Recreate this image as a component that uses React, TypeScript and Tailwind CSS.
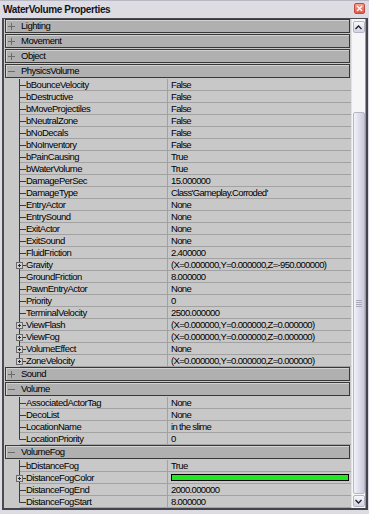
import React from "react";

type Prop = { name: string; value: string; expand?: boolean; color?: string };
type Group = { name: string; props?: Prop[] };

const groups: Group[] = [
    { name: "Lighting" },
    { name: "Movement" },
    { name: "Object" },
    {
        name: "PhysicsVolume",
        props: [
            { name: "bBounceVelocity", value: "False" },
            { name: "bDestructive", value: "False" },
            { name: "bMoveProjectiles", value: "False" },
            { name: "bNeutralZone", value: "False" },
            { name: "bNoDecals", value: "False" },
            { name: "bNoInventory", value: "False" },
            { name: "bPainCausing", value: "True" },
            { name: "bWaterVolume", value: "True" },
            { name: "DamagePerSec", value: "15.000000" },
            { name: "DamageType", value: "Class'Gameplay.Corroded'" },
            { name: "EntryActor", value: "None" },
            { name: "EntrySound", value: "None" },
            { name: "ExitActor", value: "None" },
            { name: "ExitSound", value: "None" },
            { name: "FluidFriction", value: "2.400000" },
            { name: "Gravity", value: "(X=0.000000,Y=0.000000,Z=-950.000000)", expand: true },
            { name: "GroundFriction", value: "8.000000" },
            { name: "PawnEntryActor", value: "None" },
            { name: "Priority", value: "0" },
            { name: "TerminalVelocity", value: "2500.000000" },
            { name: "ViewFlash", value: "(X=0.000000,Y=0.000000,Z=0.000000)", expand: true },
            { name: "ViewFog", value: "(X=0.000000,Y=0.000000,Z=0.000000)", expand: true },
            { name: "VolumeEffect", value: "None", expand: true },
            { name: "ZoneVelocity", value: "(X=0.000000,Y=0.000000,Z=0.000000)", expand: true },
        ],
    },
    { name: "Sound" },
    {
        name: "Volume",
        props: [
            { name: "AssociatedActorTag", value: "None" },
            { name: "DecoList", value: "None" },
            { name: "LocationName", value: "in the slime" },
            { name: "LocationPriority", value: "0" },
        ],
    },
    {
        name: "VolumeFog",
        props: [
            { name: "bDistanceFog", value: "True" },
            { name: "DistanceFogColor", value: "", expand: true, color: "#22e822" },
            { name: "DistanceFogEnd", value: "2000.000000" },
            { name: "DistanceFogStart", value: "8.000000" },
        ],
    },
];

function TreeLines({ last, expand }: { last: boolean; expand?: boolean }) {
    return (
        <svg className="absolute left-[12px] top-0" width="14" height="12" viewBox="0 0 14 12">
            {expand ? (
                <>
                    <path d="M3.5 0V3" stroke="#3a3a3a" />
                    {!last && <path d="M3.5 9V12" stroke="#3a3a3a" />}
                    <rect x="0.5" y="3.5" width="6" height="6" fill="#d0d0d0" stroke="#6a6a6a" />
                    <path d="M2 6.5H5M3.5 5V8" stroke="#2a2a2a" />
                    <path d="M7 6.5H10" stroke="#3a3a3a" />
                </>
            ) : (
                <>
                    <path d={last ? "M3.5 0V6.5" : "M3.5 0V12"} stroke="#3a3a3a" />
                    <path d="M3.5 6.5H10" stroke="#3a3a3a" />
                </>
            )}
        </svg>
    );
}

function CategoryRow({ name, open }: { name: string; open: boolean }) {
    return (
        <div className="h-[15px] px-[1px] pb-[1px]">
            <div className="h-[14px] flex items-center bg-[#b0b0b0] border border-[#383838] shadow-[inset_1px_1px_0_#d2d2d2]">
                <svg className="ml-[2px] shrink-0" width="7" height="7" viewBox="0 0 7 7">
                    <path d="M0 3.5H7" stroke="#6c6c6c" />
                    {!open && <path d="M3.5 0V7" stroke="#6c6c6c" />}
                </svg>
                <span className="ml-[6px] leading-[12px]">{name}</span>
            </div>
        </div>
    );
}

function PropRow({ prop, last }: { prop: Prop; last: boolean }) {
    return (
        <div className="relative h-[12px] flex">
            <div className="w-[16px] shrink-0" />
            <TreeLines last={last} expand={prop.expand} />
            <div className="w-[147px] shrink-0 border-b border-[#a2a2a2] pl-[6px] leading-[11px] whitespace-nowrap overflow-hidden">
                {prop.name}
            </div>
            <div className="flex-1 border-b border-l border-[#a2a2a2] pl-[3px] leading-[11px] tracking-[-0.65px] whitespace-nowrap overflow-hidden flex items-center">
                {prop.color ? (
                    <div className="h-[7px] w-[178px] border border-black" style={{ backgroundColor: prop.color }} />
                ) : (
                    prop.value
                )}
            </div>
        </div>
    );
}

function Chevron({ down }: { down?: boolean }) {
    return (
        <svg width="7" height="5" viewBox="0 0 7 5">
            <path d={down ? "M0.5 1L3.5 4L6.5 1" : "M0.5 4L3.5 1L6.5 4"} stroke="#202030" strokeWidth="1.4" fill="none" />
        </svg>
    );
}

export default function App() {
    return (
        <div className="w-[369px] h-[514px] bg-[#dcdce2] overflow-hidden font-['Liberation_Sans',Arial,sans-serif] text-[9.5px] tracking-[-0.5px] text-black">
            {/* Title bar */}
            <div className="h-[18px] flex items-center justify-between pl-[3px] pr-[4px] border-t border-[#b8b8c4]">
                <span className="font-bold text-[10px] tracking-[-0.35px] text-[#141420]">WaterVolume Properties</span>
                <div className="w-[11px] h-[11px] mb-[2px] rounded-[2px] border border-[#c04a40] bg-gradient-to-b from-[#f4a090] to-[#dc5a48] flex items-center justify-center">
                    <svg width="7" height="7" viewBox="0 0 7 7">
                        <path d="M1 1L6 6M6 1L1 6" stroke="#ffffff" strokeWidth="1.4" />
                    </svg>
                </div>
            </div>

            {/* Body */}
            <div className="ml-[2px] w-[366px] h-[492px] flex border-t border-l-2 border-r-2 border-b-2 border-t-[#4a4a52] border-l-[#4a4a52] border-r-[#44444c] border-b-[#44444c]">
                <div className="w-[347px] bg-[#c8c8c8] flex flex-col">
                    {groups.map(g => (
                        <React.Fragment key={g.name}>
                            <CategoryRow name={g.name} open={!!g.props} />
                            {g.props?.map((p, i) => (
                                <PropRow key={p.name} prop={p} last={i === g.props!.length - 1} />
                            ))}
                        </React.Fragment>
                    ))}
                </div>

                {/* Scrollbar */}
                <div className="w-[15px] bg-[#f6f6f8] border-l border-[#e2e2e6] flex flex-col items-center border-r border-r-[#9a9aa6]">
                    <div className="mt-[2px] w-[12px] h-[12px] rounded-[2px] border border-[#b4b4c6] bg-gradient-to-b from-[#f8f8fc] to-[#d4d4e2] flex items-center justify-center">
                        <Chevron />
                    </div>
                    <div className="h-[79px]" />
                    <div className="w-[12px] h-[382px] rounded-[2px] border border-[#b6b6c8] bg-gradient-to-r from-[#f2f2fa] to-[#cacadc] flex flex-col items-center justify-center gap-[1px]">
                        <div className="w-[6px] h-[1px] bg-[#a8a8ba]" />
                        <div className="w-[6px] h-[1px] bg-[#a8a8ba]" />
                        <div className="w-[6px] h-[1px] bg-[#a8a8ba]" />
                        <div className="w-[6px] h-[1px] bg-[#a8a8ba]" />
                    </div>
                    <div className="flex-1" />
                    <div className="mb-[1px] w-[12px] h-[12px] rounded-[2px] border border-[#b4b4c6] bg-gradient-to-b from-[#f8f8fc] to-[#d4d4e2] flex items-center justify-center">
                        <Chevron down />
                    </div>
                </div>
            </div>
        </div>
    );
}
